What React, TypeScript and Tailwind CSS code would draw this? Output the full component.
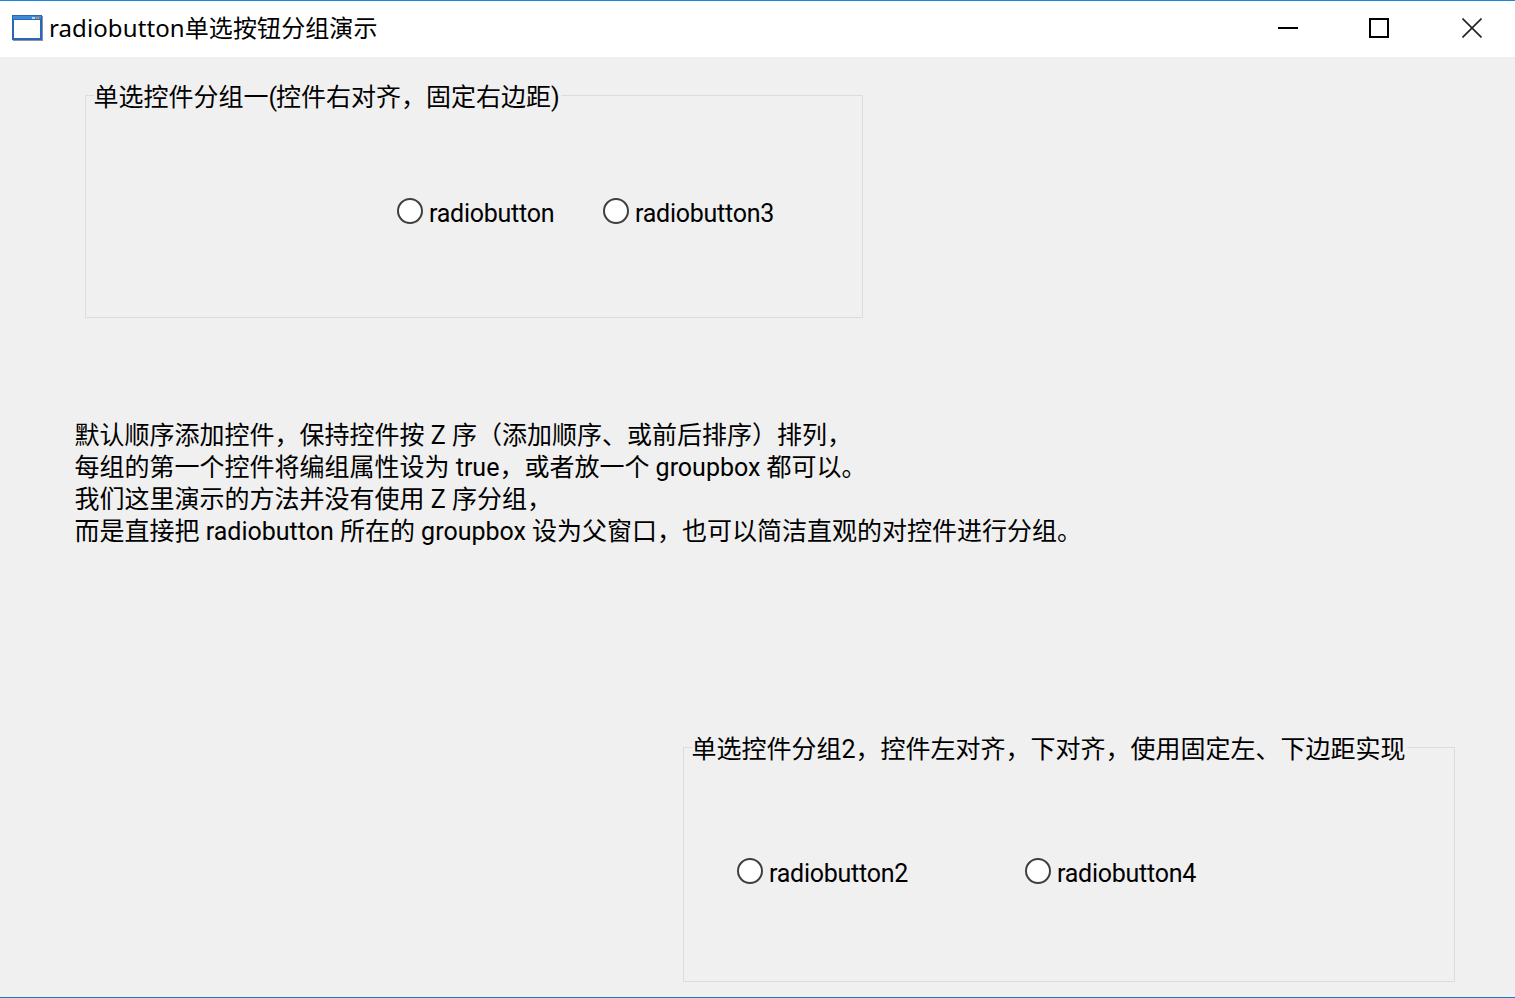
const bodyFont = "font-['Roboto','Noto_Sans_CJK_SC',sans-serif]";
const titleFont = "font-['Noto_Sans','Noto_Sans_CJK_SC',sans-serif]";

function WindowIcon() {
  return (
    <svg width="31" height="26" viewBox="0 0 31 26" className="shrink-0">
      <rect x="1" y="1" width="30" height="25" fill="#8a94a6" />
      <rect x="0" y="0" width="30" height="25" fill="#2a66b8" />
      <rect x="1" y="1" width="28" height="3" fill="#3f8ad8" />
      <rect x="2" y="5" width="26" height="18" fill="#fffffb" />
      <rect x="20" y="2" width="3" height="2" fill="#bcd6f2" />
      <rect x="24" y="2" width="3" height="2" fill="#d9805a" />
    </svg>
  );
}

function Radio({ label, className }: { label: string; className: string }) {
  return (
    <div className={`flex items-start gap-[6px] ${className}`}>
      <span className="w-[26px] h-[26px] rounded-full border-2 border-[#3f3f3f] bg-white shrink-0" />
      <span className="text-[25px] leading-[32px] tracking-[-0.25px]">{label}</span>
    </div>
  );
}

function GroupBox({
  title,
  className,
  children,
}: {
  title: React.ReactNode;
  className: string;
  children: React.ReactNode;
}) {
  return (
    <div className={`relative border border-[#dcdcdc] flex ${className}`}>
      <span className="absolute left-[7.5px] -top-[14px] pr-[1px] bg-[#f0f0f0] text-[25px] leading-[32px] whitespace-nowrap">
        {title}
      </span>
      {children}
    </div>
  );
}

export default function App() {
  return (
    <div className={`${bodyFont} h-[998px] bg-[#f0f0f0] text-black overflow-hidden flex flex-col border-b border-[#1f7ac4]`}>
      <div className="h-[57px] bg-white border-t border-[#1a86d8] flex items-center justify-between shrink-0 pb-[2px]">
        <div className="flex items-center pl-[12px] gap-[6px]">
          <WindowIcon />
          <span className={`${titleFont} text-[24px] leading-[32px] tracking-[0.1px] whitespace-nowrap`}>
            radiobutton单选按钮分组演示
          </span>
        </div>
        <div className="flex items-center gap-[71px] pr-[33px]">
          <svg width="20" height="20" viewBox="0 0 20 20">
            <path d="M0 9h20v2H0z" fill="#000" />
          </svg>
          <svg width="20" height="20" viewBox="0 0 20 20">
            <rect x="1" y="1" width="18" height="18" fill="none" stroke="#000" strokeWidth="2" />
          </svg>
          <svg width="20" height="20" viewBox="0 0 20 20" className="ml-[2px]">
            <path d="M0.5 0.5L19.5 19.5M19.5 0.5L0.5 19.5" fill="none" stroke="#222" strokeWidth="1.6" />
          </svg>
        </div>
      </div>

      <GroupBox
        title={
          <>
            单选控件分组一<span className="tracking-[-1px]">(</span>控件右对齐，固定右边距)
          </>
        }
        className="ml-[85px] mt-[38px] w-[778px] h-[223px] pl-[311px] pt-[102px] items-start"
      >
        <Radio label="radiobutton" className="w-[206px]" />
        <Radio label="radiobutton3" className="w-[175px]" />
      </GroupBox>

      <div className="ml-[74.5px] mt-[102px] text-[25px] leading-[32px] whitespace-nowrap">
        <p>默认顺序添加控件，保持控件按 Z 序（添加顺序、或前后排序）排列，</p>
        <p>每组的第一个控件将编组属性设为 true，或者放一个 groupbox 都可以。</p>
        <p>我们这里演示的方法并没有使用 Z 序分组，</p>
        <p>而是直接把 radiobutton 所在的 groupbox 设为父窗口，也可以简洁直观的对控件进行分组。</p>
      </div>

      <GroupBox
        title="单选控件分组2，控件左对齐，下对齐，使用固定左、下边距实现"
        className="ml-[683px] mt-[199px] w-[772px] h-[235px] pl-[53px] pt-[110px] items-start"
      >
        <Radio label="radiobutton2" className="w-[288px]" />
        <Radio label="radiobutton4" className="w-[175px]" />
      </GroupBox>
    </div>
  );
}
